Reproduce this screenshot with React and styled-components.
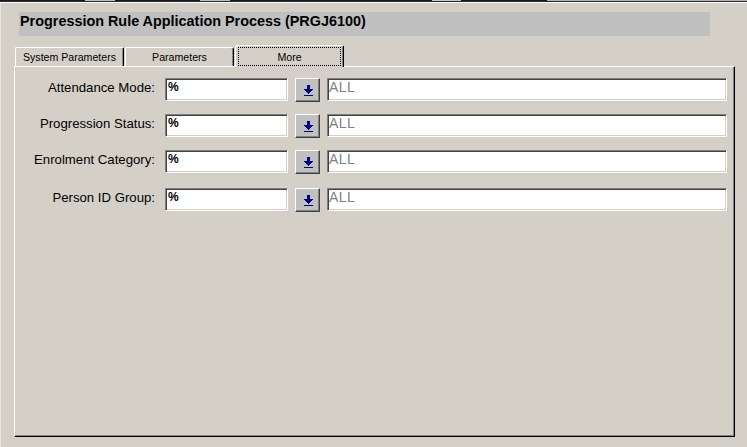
import React from "react";
import styled, { createGlobalStyle } from "styled-components";

const GlobalStyle = createGlobalStyle`
  body {
    margin: 0;
    background: #d4d0c8;
  }
`;

const Page = styled.div`
  width: 747px;
  height: 447px;
  background: #d4d0c8;
  display: flex;
  flex-direction: column;
  overflow: hidden;
  box-shadow: inset 1px 0 0 #e6e4df;
  font-family: "Liberation Sans", Arial, sans-serif;
  color: #000;
`;

/* strip left over from the window above */
const EdgeRow = styled.div`
  display: flex;
  height: 1px;
`;

const Segment = styled.div`
  width: ${(p) => (p.$w ? `${p.$w}px` : "auto")};
  flex: ${(p) => (p.$w ? "none" : 1)};
  background: ${(p) => p.$tone};
`;

const Line = styled.div`
  height: 1px;
  background: ${(p) => p.$tone};
`;

const TitleBar = styled.div`
  margin: 9px 37px 0 19px;
  height: 24px;
  box-sizing: border-box;
  padding: 1px 0 0 1px;
  background: #c0c0c0;
  font-size: 14.4px;
  font-weight: bold;
  line-height: 16px;
  white-space: nowrap;
`;

const TabStrip = styled.div`
  display: flex;
  align-items: flex-end;
  height: 21px;
  margin: 9px 0 0 15px;
  position: relative;
  z-index: 1;
`;

const Tab = styled.div`
  width: 109px;
  height: ${(p) => (p.$active ? 22 : 19)}px;
  margin: 0 1px ${(p) => (p.$active ? -1 : 0)}px 0;
  box-sizing: border-box;
  background: #d4d0c8;
  border-top: 1px solid #fff;
  border-left: 1px solid #fff;
  border-right: 1px solid #000;
  border-radius: 2px 2px 0 0;
  box-shadow: inset -1px 0 0 #808080;
  display: flex;
  justify-content: center;
  align-items: ${(p) => (p.$active ? "flex-start" : "center")};
  font-size: 10.6px;
  white-space: nowrap;
`;

const FocusRing = styled.div`
  width: 103px;
  height: 19px;
  margin-top: 1px;
  box-sizing: border-box;
  border: 1px dotted #000;
  display: flex;
  align-items: center;
  justify-content: center;
`;

const Panel = styled.div`
  flex: 1;
  margin: 0 12px 10px 14px;
  padding: 11px 7px 0 0;
  border-top: 1px solid #fff;
  border-left: 1px solid #fff;
  border-right: 1px solid #000;
  border-bottom: 1px solid #000;
  box-shadow: inset -1px -1px 0 #808080;
  display: flex;
  flex-direction: column;
`;

const Row = styled.div`
  display: flex;
  align-items: flex-start;
  height: 24px;
  margin-top: ${(p) => p.$gap}px;
`;

const Label = styled.div`
  width: 140px;
  margin-right: 10px;
  padding-top: 2px;
  text-align: right;
  font-size: 13.2px;
  line-height: 15px;
  white-space: nowrap;
`;

const Field = styled.div`
  height: 23px;
  box-sizing: border-box;
  background: #fff;
  border: 1px solid;
  border-color: #808080 #fff #fff #808080;
  box-shadow: inset 1px 1px 0 #404040, inset -1px -1px 0 #d4d0c8;
  padding: 1px 0 0 ${(p) => (p.$code ? 2 : 1)}px;
  line-height: 14px;
  white-space: nowrap;
  overflow: hidden;
  ${(p) =>
    p.$code
      ? `width: 123px; font-size: 12px; font-weight: bold;`
      : `flex: 1; font-size: 14px; letter-spacing: 0.5px; color: #808080;`}
`;

const DropButton = styled.div`
  width: 25px;
  height: 24px;
  margin: 0 7px;
  box-sizing: border-box;
  padding: 6px 0 0 1px;
  background: #c0c0c0;
  border: 1px solid;
  border-color: #fff #404040 #404040 #fff;
  box-shadow: inset -1px -1px 0 #808080;
  display: flex;
  justify-content: center;
  align-items: flex-start;
`;

const DownArrow = () => (
  <svg width="9" height="11" viewBox="0 0 9 11" shapeRendering="crispEdges" fill="#000080">
    <rect x="3" y="0" width="3" height="4" />
    <rect x="0" y="4" width="9" height="1" />
    <rect x="1" y="5" width="7" height="1" />
    <rect x="2" y="6" width="5" height="1" />
    <rect x="3" y="7" width="3" height="1" />
    <rect x="4" y="8" width="1" height="1" />
    <rect x="0" y="10" width="9" height="1" />
  </svg>
);

const segments = [
  { w: 85, tone: "#1c1c1c" },
  { w: 30, tone: "#c0c0c0" },
  { w: 85, tone: "#1c1c1c" },
  { w: 30, tone: "#c0c0c0" },
  { w: 202, tone: "#1c1c1c" },
  { w: 29, tone: "#c8c8c8" },
  { w: 86, tone: "#1c1c1c" },
  { tone: "#b4b4b4" },
];

/* the form's rows are not evenly spaced in the original */
const fields = [
  { label: "Attendance Mode:", gap: 0 },
  { label: "Progression Status:", gap: 12 },
  { label: "Enrolment Category:", gap: 12 },
  { label: "Person ID Group:", gap: 14 },
];

const tabs = ["System Parameters", "Parameters", "More"];

export default function App() {
  return (
    <>
      <GlobalStyle />
      <Page>
        <EdgeRow>
          {segments.map((s, i) => (
            <Segment key={i} $w={s.w} $tone={s.tone} />
          ))}
        </EdgeRow>
        <Line $tone="#2a2a2a" />
        <Line $tone="#ffffff" />

        <TitleBar>Progression Rule Application Process (PRGJ6100)</TitleBar>

        <TabStrip>
          {tabs.map((t) => {
            const active = t === "More";
            return (
              <Tab key={t} $active={active}>
                {active ? <FocusRing>{t}</FocusRing> : t}
              </Tab>
            );
          })}
        </TabStrip>

        <Panel>
          {fields.map((f) => (
            <Row key={f.label} $gap={f.gap}>
              <Label>{f.label}</Label>
              <Field $code>%</Field>
              <DropButton>
                <DownArrow />
              </DropButton>
              <Field>ALL</Field>
            </Row>
          ))}
        </Panel>
      </Page>
    </>
  );
}
